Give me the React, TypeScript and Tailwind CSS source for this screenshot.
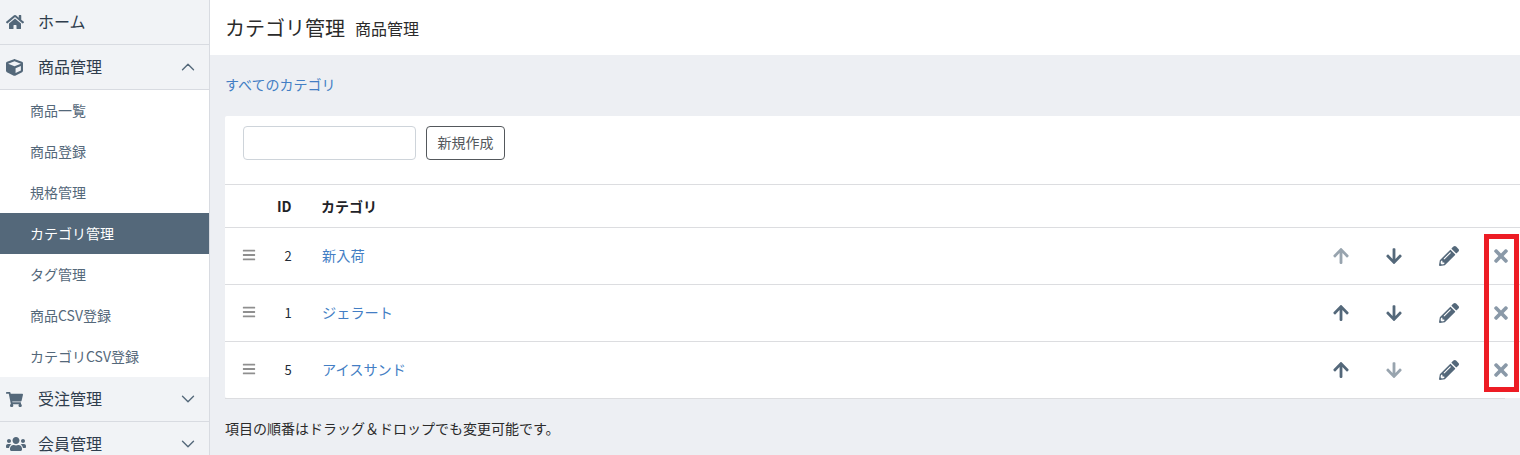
import { ChevronDown, ChevronUp } from "lucide-react";
import {
  FaArrowDown,
  FaArrowUp,
  FaBars,
  FaCube,
  FaHome,
  FaPencilAlt,
  FaShoppingCart,
  FaTimes,
  FaUsers,
} from "react-icons/fa";
import { ReactElement } from "react";

const font = "[font-family:'Noto_Sans_CJK_JP','Noto_Sans',sans-serif]";

const subItems = [
  "商品一覧",
  "商品登録",
  "規格管理",
  "カテゴリ管理",
  "タグ管理",
  "商品CSV登録",
  "カテゴリCSV登録",
];

const rows = [
  { id: 2, name: "新入荷", up: false, down: true },
  { id: 1, name: "ジェラート", up: true, down: true },
  { id: 5, name: "アイスサンド", up: true, down: false },
];

const MenuRow = ({
  icon,
  label,
  open,
}: {
  icon: ReactElement;
  label: string;
  open?: boolean;
}) => {
  return (
    <div className="flex h-[45px] shrink-0 items-center border-b border-[#d8dbe1] bg-[#f1f3f6] pl-[6px] pr-[10px] text-base text-[#2f3d4d]">
      <span className="flex w-[32px] shrink-0 text-[#54687a]">{icon}</span>
      <span className="flex-1 pb-[3px]">{label}</span>
      {open === true && <ChevronUp size={22} strokeWidth={1.5} className="text-[#54687a]" />}
      {open === false && <ChevronDown size={22} strokeWidth={1.5} className="text-[#54687a]" />}
    </div>
  );
};

const Sidebar = () => {
  return (
    <aside className="flex h-[455px] w-[210px] shrink-0 flex-col overflow-hidden border-r border-[#d8dbe1] bg-white">
      <MenuRow icon={<FaHome size={18} />} label="ホーム" />
      <MenuRow icon={<FaCube size={17} />} label="商品管理" open />
      <ul className="shrink-0">
        {subItems.map((item) => (
          <li
            key={item}
            className={
              item === "カテゴリ管理"
                ? "flex h-[41px] items-center bg-[#54687a] pb-[2px] pl-[30px] text-sm text-white"
                : "flex h-[41px] items-center pb-[2px] pl-[30px] text-sm text-[#54687a]"
            }
          >
            {item}
          </li>
        ))}
      </ul>
      <MenuRow icon={<FaShoppingCart size={17} />} label="受注管理" open={false} />
      <MenuRow icon={<FaUsers size={20} />} label="会員管理" open={false} />
    </aside>
  );
};

const CategoryRow = ({ id, name, up, down }: (typeof rows)[number]) => {
  return (
    <div className="flex h-[57px] items-center border-t border-[#dcdde0]">
      <span className="flex w-[48px] justify-center pb-[2px] pr-[1px] text-[#8f8f8f]">
        <FaBars size={14} />
      </span>
      <span className="w-[49px] pr-[19px] text-center text-[13px] text-[#222b36]">{id}</span>
      <a className="flex-1 text-[14.2px] text-[#437ec4]">{name}</a>
      <span className="flex w-[53px] justify-center pr-[1px] text-[#54687a]">
        <FaArrowUp size={18} className={up ? "" : "opacity-60"} />
      </span>
      <span className="flex w-[54px] justify-center pr-[2px] text-[#54687a]">
        <FaArrowDown size={18} className={down ? "" : "opacity-60"} />
      </span>
      <span className="flex w-[54px] justify-center text-[#54687a]">
        <FaPencilAlt size={20} />
      </span>
      <span className="flex w-[44px] justify-center pl-[6px] text-[#8a99a8]">
        <FaTimes size={20} />
      </span>
    </div>
  );
};

export default function App() {
  return (
    <div className={"flex h-[455px] w-[1520px] overflow-hidden bg-[#edeff3] " + font}>
      <Sidebar />
      <main className="relative flex min-w-0 flex-1 flex-col">
        <header className="flex h-[55px] shrink-0 items-center gap-[10px] bg-white pl-[15px]">
          <h1 className="text-[20px] text-[#2b2b2b]">カテゴリ管理</h1>
          <span className="text-base text-[#2b2b2b]">商品管理</span>
        </header>
        <div className="shrink-0 px-[15px]">
          <div className="flex h-[61px] items-center pb-[4px] text-sm text-[#437ec4]">
            すべてのカテゴリ
          </div>
          <section className="mr-[-15px] rounded-l-[2px] bg-white">
            <div className="flex h-[68px] items-start gap-[10px] pl-[18px] pt-[10px]">
              <input className="h-[34px] w-[173px] rounded-[4px] border border-[#ced4da] bg-white" />
              <button className="h-[34px] w-[79px] rounded-[4px] border border-[#54585c] pb-[2px] text-sm text-[#54585c]">
                新規作成
              </button>
            </div>
            <div className="flex h-[43px] items-center border-t border-[#dcdde0] text-sm font-bold text-[#1f2328]">
              <span className="w-[52px]" />
              <span className="w-[44px]">ID</span>
              <span>カテゴリ</span>
            </div>
            {rows.map((row) => (
              <CategoryRow key={row.id} {...row} />
            ))}
          </section>
          <div className="flex h-[61px] items-center border-t border-[#dcdde0] pb-[2px] text-sm text-[#2b2b2b]">
            項目の順番はドラッグ＆ドロップでも変更可能です。
          </div>
        </div>
        {/* 赤枠の注釈 */}
        <div className="absolute left-[1274px] top-[234px] h-[158px] w-[35px] border-[5px] border-[#ed1c24]" />
      </main>
    </div>
  );
}
